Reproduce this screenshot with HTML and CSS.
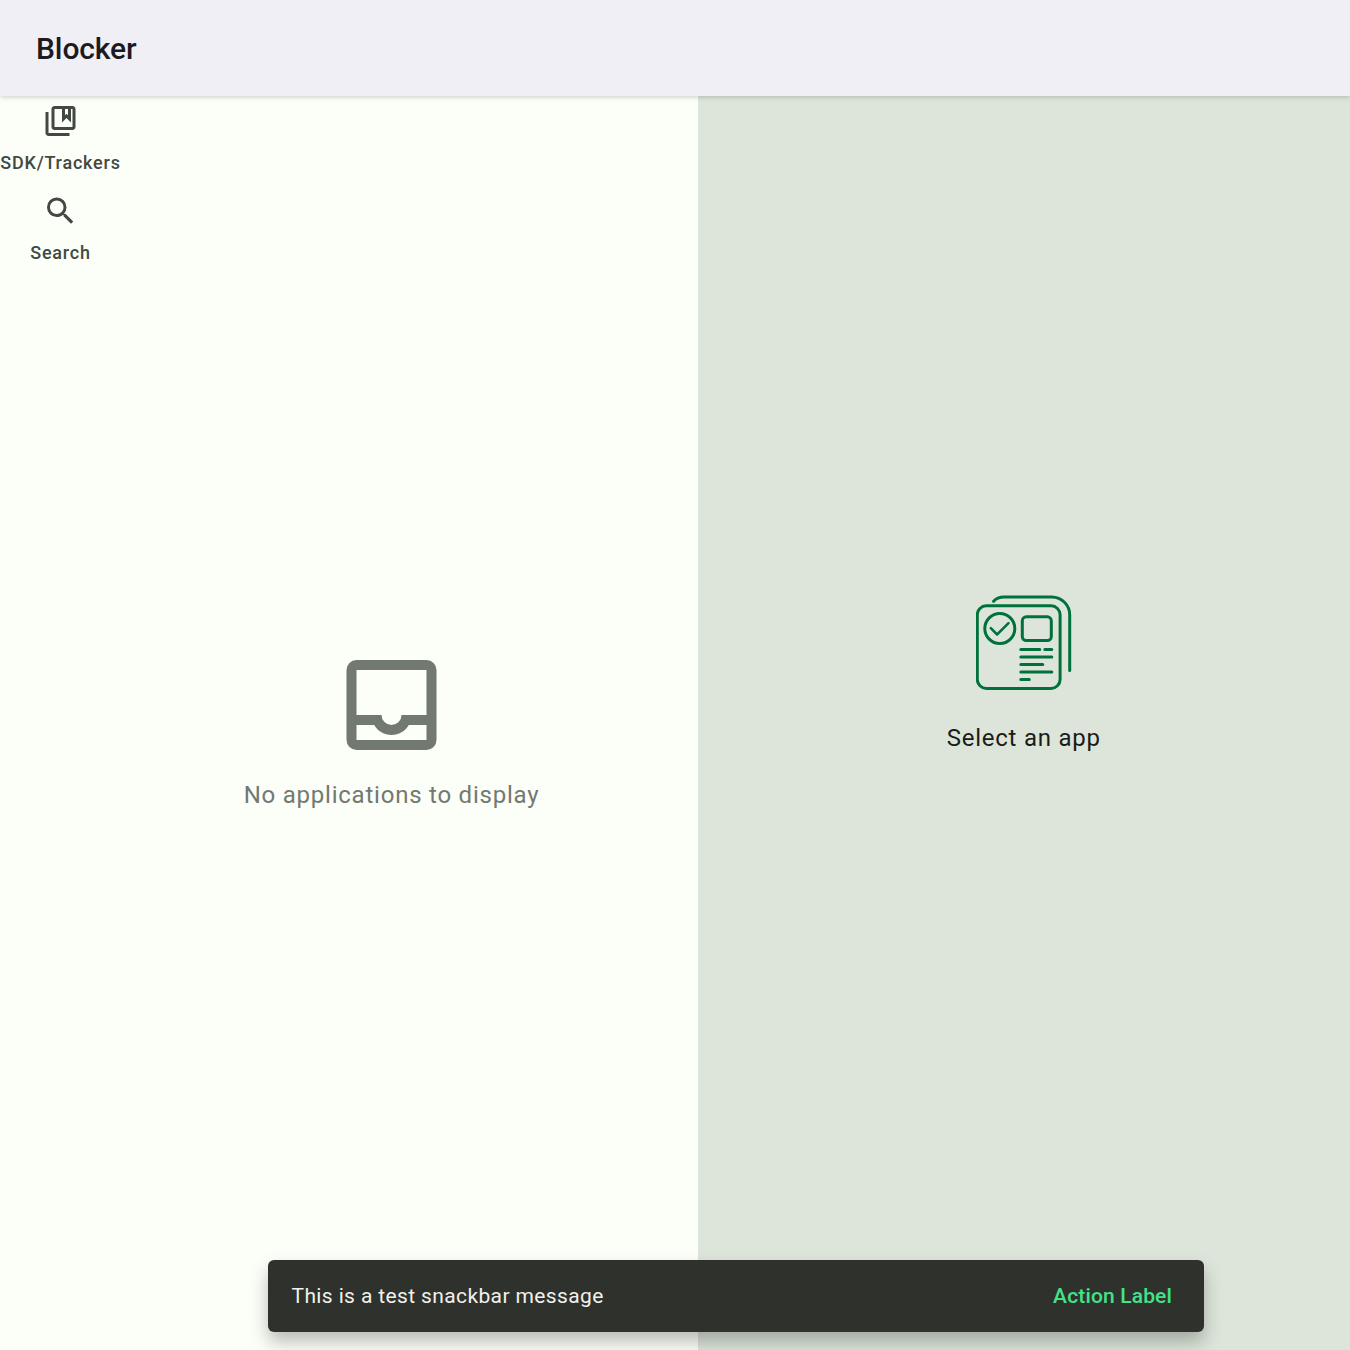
FILE: index.html
```html
<!DOCTYPE html>
<html lang="en">
<head>
<meta charset="utf-8">
<title>Blocker</title>
<link rel="stylesheet" href="styles.css">
</head>
<body>
<div class="app">
  <header class="top-bar"><h1 class="title">Blocker</h1></header>
  <main class="content">
    <section class="list-side">
      <nav class="rail">
        <a class="rail-item">
          <svg class="rail-icon" viewBox="0.333 0 24 24"><path fill-rule="evenodd" d="M4 6H2v14c0 1.1.9 2 2 2h14v-2H4V6zM20 2H8c-1.1 0-2 .9-2 2v12c0 1.1.9 2 2 2h12c1.1 0 2-.9 2-2V4c0-1.1-.9-2-2-2zm0 14H8V4h5v9l3-3 3 3V4h1v12zM15 4h2v4.17l-1-1-1 1V4z"/></svg>
          <span class="rail-label">SDK/Trackers</span>
        </a>
        <a class="rail-item">
          <svg class="rail-icon" viewBox="0.333 0 24 24"><path d="M15.5 14h-.79l-.28-.27A6.471 6.471 0 0 0 16 9.5 6.5 6.5 0 1 0 9.5 16c1.61 0 3.09-.59 4.23-1.57l.27.28v.79l5 4.99L20.49 19l-4.99-5zm-6 0C7.01 14 5 11.99 5 9.5S7.01 5 9.5 5 14 7.01 14 9.5 11.99 14 9.5 14z"/></svg>
          <span class="rail-label">Search</span>
        </a>
      </nav>
      <div class="empty-list">
        <svg class="inbox-icon" viewBox="0.1 0 24 24"><path fill-rule="evenodd" d="M5 3h14a2 2 0 0 1 2 2v14a2 2 0 0 1-2 2H5a2 2 0 0 1-2-2V5a2 2 0 0 1 2-2zM5 5v9h5a2 2 0 0 0 4 0h5V5zM5 16v3h14v-3h-3.54a4 4 0 0 1-6.92 0z"/></svg>
        <p class="message">No applications to display</p>
      </div>
    </section>
    <section class="detail-side">
      <svg class="select-icon" viewBox="0.2 0 96 96">
        <rect x="1.5" y="10.8" width="82.8" height="82.6" rx="9"/>
        <path d="M17.8 6.3Q21.5 2 28 2H76A18 18 0 0 1 93.9 20V75.5"/>
        <circle cx="24" cy="33.5" r="15"/>
        <path class="check" d="M15 33.2L21.3 39.5 32.7 28.2"/>
        <rect x="46.5" y="21.8" width="29" height="23.7" rx="4"/>
        <path d="M45 54.5H64M69 54.5H76M45 62H76M45 69.5H67M45 77H76M45 84.5H53.5"/>
      </svg>
      <p class="message">Select an app</p>
    </section>
  </main>
  <div class="snackbar" role="status">
    <span class="snackbar-text">This is a test snackbar message</span>
    <button class="snackbar-action">Action Label</button>
  </div>
</div>
</body>
</html>
```

FILE: styles.css
```css
* { box-sizing: border-box; }

body {
  margin: 0;
  font-family: Roboto, "Liberation Sans", sans-serif;
}

.app {
  position: relative;
  display: flex;
  flex-direction: column;
  height: 1350px;
  overflow: hidden;
  background: #fcfef8;
}

.top-bar {
  z-index: 1;
  display: flex;
  align-items: center;
  flex: none;
  height: 96px;
  padding: 2px 36px 0;
  background: #f1eff6;
  box-shadow: 0 1px 5px rgba(0, 0, 0, .2);
}

.title {
  margin: 0;
  font-size: 30px;
  font-weight: 500;
  line-height: 36px;
  letter-spacing: -.1px;
  color: #1b1b1f;
}

.content {
  display: grid;
  grid-template-columns: 697.5px 1fr;
  flex: 1;
}

.list-side {
  display: grid;
  grid-template-columns: 121px 1fr;
  padding-right: 35.5px;
}

.rail { padding-top: 7px; }

.rail-item {
  display: flex;
  flex-direction: column;
  align-items: center;
  height: 90px;
  color: #424942;
}

.rail-icon {
  width: 36px;
  height: 36px;
  fill: currentColor;
}

.rail-label {
  margin-top: 12px;
  font-size: 18px;
  font-weight: 500;
  line-height: 24px;
  letter-spacing: .78px;
  white-space: nowrap;
}

.empty-list {
  display: flex;
  flex-direction: column;
  align-items: center;
  padding-top: 549px;
  color: #727971;
}

.inbox-icon {
  width: 120px;
  height: 120px;
  fill: currentColor;
}

.message {
  margin: 12px 0 0;
  font-size: 24px;
  line-height: 36px;
  letter-spacing: .77px;
}

.detail-side {
  display: flex;
  flex-direction: column;
  align-items: center;
  padding-top: 499px;
  background: #dde5da;
  color: #1a1c19;
}

.detail-side .message { margin-top: 29px; }

.select-icon {
  width: 96px;
  height: 96px;
  fill: none;
  stroke: #00713b;
  stroke-width: 3;
  stroke-linecap: round;
  stroke-linejoin: round;
}

.check { stroke-width: 2.5; }

.snackbar {
  position: absolute;
  left: 267.5px;
  bottom: 18px;
  display: flex;
  align-items: center;
  justify-content: space-between;
  width: 936px;
  height: 72px;
  padding: 0 31.5px 0 24px;
  border-radius: 6px;
  background: #2f312d;
  box-shadow: 0 10px 18px rgba(0, 0, 0, .26);
}

.snackbar-text {
  font-size: 21px;
  line-height: 30px;
  letter-spacing: .375px;
  color: #f0f1ec;
}

.snackbar-action {
  padding: 0;
  border: 0;
  background: none;
  font: 500 21px/30px Roboto, "Liberation Sans", sans-serif;
  letter-spacing: .15px;
  color: #44e288;
}
```
